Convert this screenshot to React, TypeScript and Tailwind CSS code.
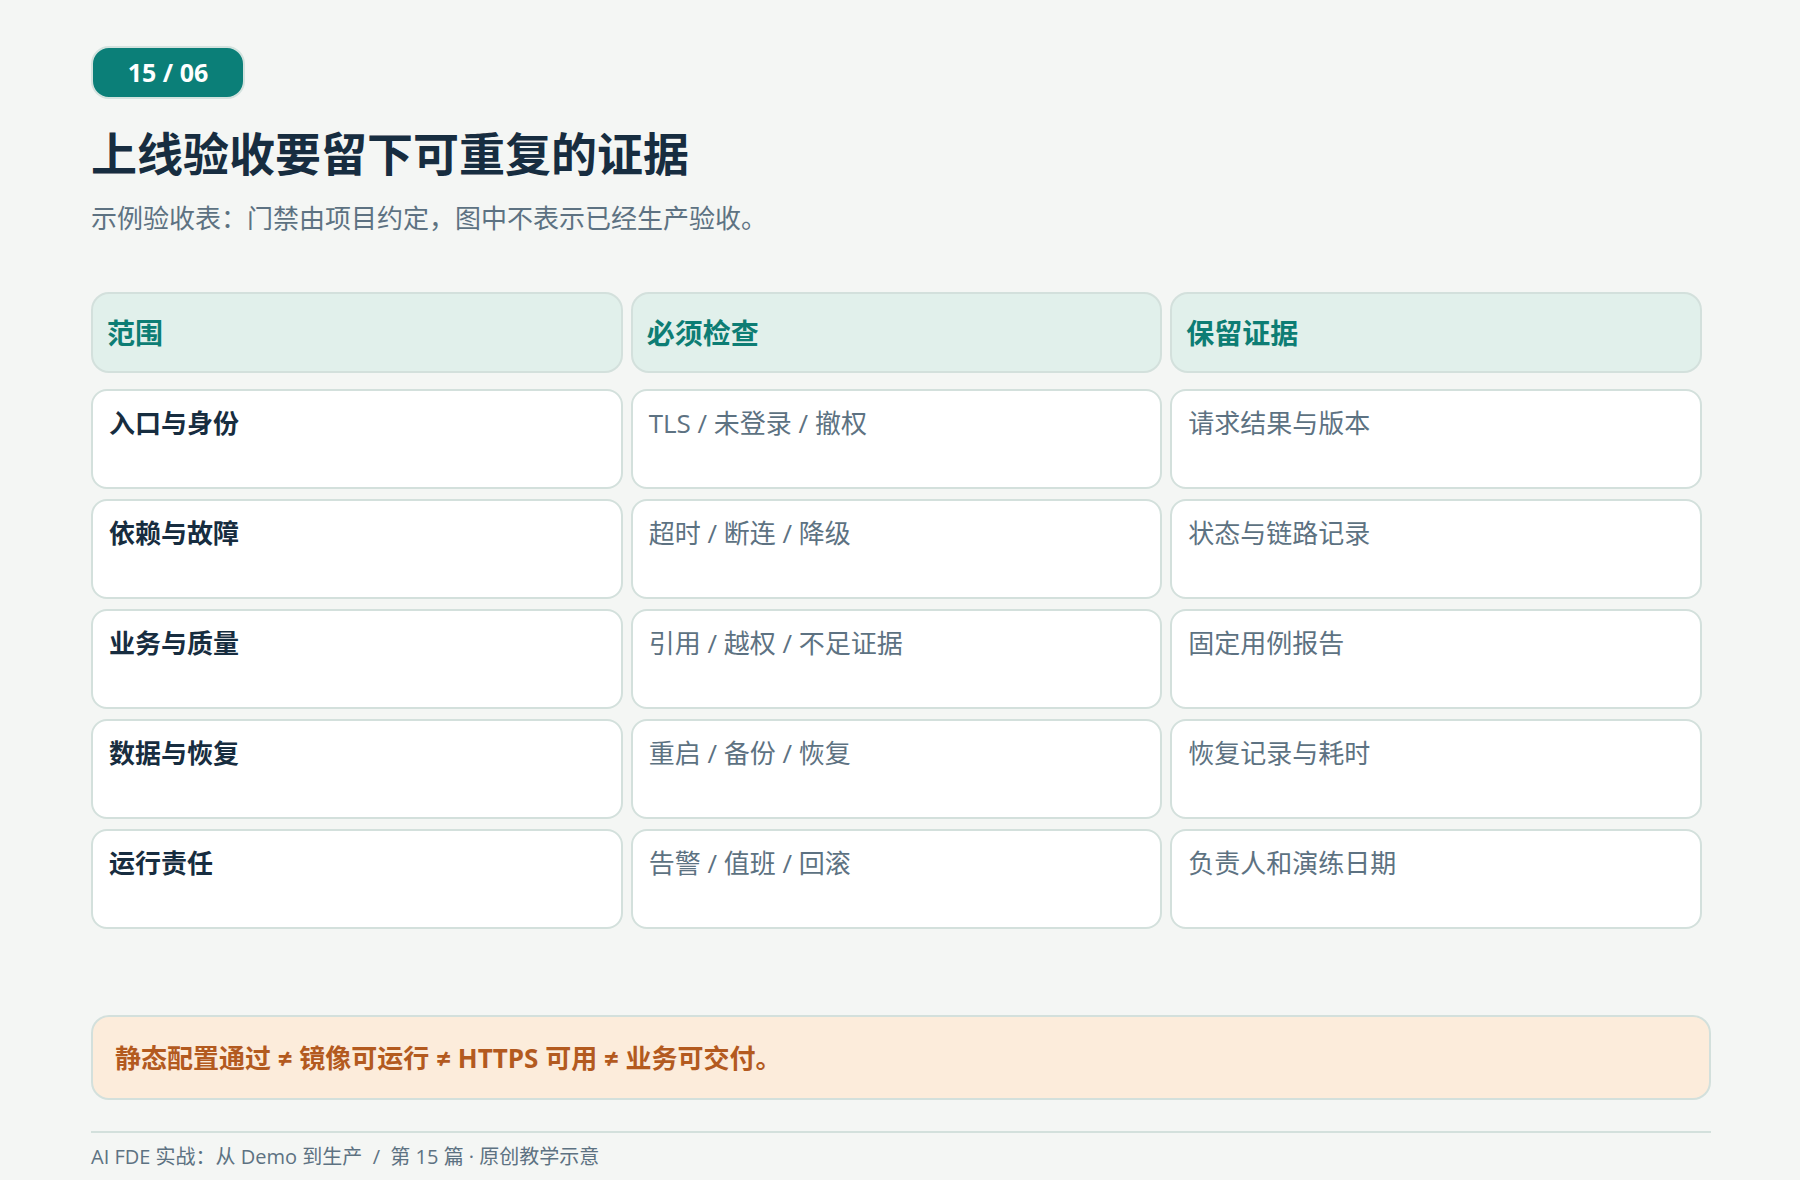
import React from "react";

const rows: { label: string; check: string; evidence: string }[] = [
  { label: "入口与身份", check: "TLS / 未登录 / 撤权", evidence: "请求结果与版本" },
  { label: "依赖与故障", check: "超时 / 断连 / 降级", evidence: "状态与链路记录" },
  { label: "业务与质量", check: "引用 / 越权 / 不足证据", evidence: "固定用例报告" },
  { label: "数据与恢复", check: "重启 / 备份 / 恢复", evidence: "恢复记录与耗时" },
  { label: "运行责任", check: "告警 / 值班 / 回滚", evidence: "负责人和演练日期" },
];

const headers = ["范围", "必须检查", "保留证据"];

export default function App() {
  return (
    <div className="min-h-[1180px] w-[1800px] bg-[#f4f6f4] pl-[91px] pt-[46px] font-['Open_Sans','Noto_Sans_CJK_SC',sans-serif]">
      <div className="flex h-[53px] w-[154px] items-center justify-center rounded-[18px] border-2 border-[#d3e2de] bg-[#0b7f78] text-[25px] font-bold leading-none text-white">
        15 / 06
      </div>

      <h1 className="mt-[27px] text-[46px] font-bold leading-[55px] text-[#172d40]">
        上线验收要留下可重复的证据
      </h1>
      <p className="mt-[19px] text-[26px] leading-[36px] text-[#5d7282]">
        示例验收表：门禁由项目约定，图中不表示已经生产验收。
      </p>

      <div className="mt-[56px] w-[1611px]">
        <div className="grid grid-cols-3 gap-x-[8px]">
          {headers.map((h) => (
            <div
              key={h}
              className="flex h-[81px] items-center rounded-[18px] border-2 border-[#d3e0dc] bg-[#e1f0eb] px-[14px] text-[28px] font-bold leading-[36px] text-[#0d7d74]"
            >
              {h}
            </div>
          ))}
        </div>
        <div className="mt-[16px] flex flex-col gap-[10px]">
          {rows.map((r) => (
            <div key={r.label} className="grid grid-cols-3 gap-x-[8px]">
              <div className="h-[100px] rounded-[16px] border-2 border-[#d3e0dc] bg-white px-[16px] pt-[14px] text-[26px] font-bold leading-[36px] text-[#172d40]">
                {r.label}
              </div>
              <div className="h-[100px] rounded-[16px] border-2 border-[#d3e0dc] bg-white px-[16px] pt-[14px] text-[26px] leading-[36px] text-[#5d7282]">
                {r.check}
              </div>
              <div className="h-[100px] rounded-[16px] border-2 border-[#d3e0dc] bg-white px-[16px] pt-[14px] text-[26px] leading-[36px] text-[#5d7282]">
                {r.evidence}
              </div>
            </div>
          ))}
        </div>
      </div>

      <div className="mt-[86px] flex h-[85px] w-[1620px] items-center rounded-[18px] border-2 border-[#d3e0dc] bg-[#fcecdb] px-[22px] text-[26px] font-bold leading-[36px] text-[#b35a1f]">
        静态配置通过 ≠ 镜像可运行 ≠ HTTPS 可用 ≠ 业务可交付。
      </div>

      <div className="mt-[31px] h-[2px] w-[1620px] bg-[#d3e0dc]" />

      <div className="mt-[10px] whitespace-pre text-[20px] leading-[28px] text-[#5d7282]">
        AI FDE 实战：从 Demo 到生产  /  第 15 篇 · 原创教学示意
      </div>
    </div>
  );
}
